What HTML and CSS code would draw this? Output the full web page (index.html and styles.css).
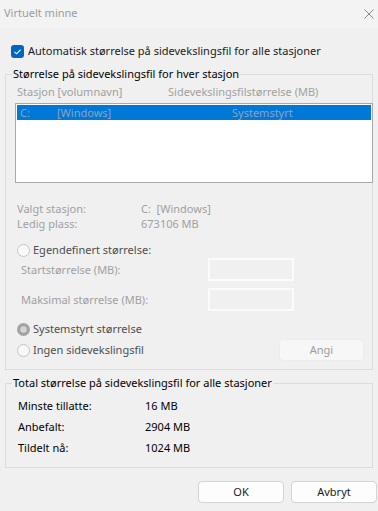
FILE: index.html
```html
<!DOCTYPE html>
<html lang="no">
<head>
<meta charset="utf-8">
<title>Virtuelt minne</title>
<link rel="stylesheet" href="styles.css">
</head>
<body>
<div class="dialog">
  <div class="titlebar">
    <span class="title">Virtuelt minne</span>
    <svg class="close" width="10" height="10" viewBox="0 0 10 10"><path d="M0.5 0.5 L9.5 9.5 M9.5 0.5 L0.5 9.5" stroke="#8a8a8a" stroke-width="1" fill="none"/></svg>
  </div>
  <div class="content">
    <label class="check-row">
      <svg class="checkbox" width="13" height="13" viewBox="0 0 13 13"><rect x="0" y="0" width="13" height="13" rx="3" fill="#0067c0"/><path d="M3.5 6.8 L5.6 8.8 L9.6 4.6" stroke="#fff" stroke-width="1.1" fill="none"/></svg>
      <span>Automatisk størrelse på sidevekslingsfil for alle stasjoner</span>
    </label>

    <fieldset class="group group-drives">
      <legend>Størrelse på sidevekslingsfil for hver stasjon</legend>
      <div class="head-row disabled">
        <span class="col-drive">Stasjon [volumnavn]</span>
        <span>Sidevekslingsfilstørrelse (MB)</span>
      </div>
      <div class="listbox">
        <div class="list-item selected">
          <span class="li-letter">C:</span>
          <span class="li-name">[Windows]</span>
          <span class="li-size">Systemstyrt</span>
        </div>
      </div>
      <div class="info disabled">
        <div class="info-row"><span class="info-label">Valgt stasjon:</span><span>C:&nbsp; [Windows]</span></div>
        <div class="info-row"><span class="info-label">Ledig plass:</span><span>673106 MB</span></div>
      </div>
      <div class="radio-row r-custom">
        <svg class="radio" width="13" height="13" viewBox="0 0 13 13"><circle cx="6.5" cy="6.5" r="6" fill="#f8f8f8" stroke="#c4c4c4" stroke-width="1"/></svg>
        <span>Egendefinert størrelse:</span>
      </div>
      <div class="field-row f-start disabled">
        <span class="field-label">Startstørrelse (MB):</span>
        <span class="field-input"></span>
      </div>
      <div class="field-row f-max disabled">
        <span class="field-label">Maksimal størrelse (MB):</span>
        <span class="field-input"></span>
      </div>
      <div class="radio-row r-system">
        <svg class="radio" width="13" height="13" viewBox="0 0 13 13"><circle cx="6.5" cy="6.5" r="6.5" fill="#a3a3a3"/><circle cx="6.5" cy="6.5" r="3.2" fill="#d6d6d6"/></svg>
        <span>Systemstyrt størrelse</span>
      </div>
      <div class="radio-row r-none">
        <svg class="radio" width="13" height="13" viewBox="0 0 13 13"><circle cx="6.5" cy="6.5" r="6" fill="#f8f8f8" stroke="#c4c4c4" stroke-width="1"/></svg>
        <span class="r-none-label">Ingen sidevekslingsfil</span>
        <span class="btn btn-disabled">Angi</span>
      </div>
    </fieldset>

    <fieldset class="group group-total">
      <legend>Total størrelse på sidevekslingsfil for alle stasjoner</legend>
      <div class="total-row"><span class="total-label">Minste tillatte:</span><span>16 MB</span></div>
      <div class="total-row"><span class="total-label">Anbefalt:</span><span>2904 MB</span></div>
      <div class="total-row"><span class="total-label">Tildelt nå:</span><span>1024 MB</span></div>
    </fieldset>

    <div class="buttons">
      <span class="btn">OK</span>
      <span class="btn">Avbryt</span>
    </div>
  </div>
</div>
</body>
</html>
```

FILE: styles.css
```css
* { box-sizing: border-box; }
html, body {
  margin: 0;
  padding: 0;
  background: #f0f0f0;
}
body {
  width: 378px;
  height: 511px;
  overflow: hidden;
  font-family: "Noto Sans", "DejaVu Sans", sans-serif;
  font-size: 11px;
  color: #1a1a1a;
}
.dialog {
  width: 378px;
  height: 511px;
  display: flex;
  flex-direction: column;
}
.titlebar {
  height: 28px;
  background: #f3f3f3;
  display: flex;
  align-items: center;
  justify-content: space-between;
  padding: 0 4px 2px 4px;
}
.title {
  color: #9c9c9c;
  line-height: 16px;
}
.close {
  margin-top: 1px;
}
.content {
  display: flex;
  flex-direction: column;
}
.check-row {
  display: flex;
  align-items: center;
  height: 16px;
  margin-top: 15px;
  padding-left: 11px;
  line-height: 16px;
}
.checkbox { margin-right: 4px; flex: none; }

.group {
  margin: 0 5px;
  padding: 0;
  border: 1px solid #dcdcdc;
  min-width: 0;
}
.group legend {
  margin-left: 6px;
  padding: 0 1px;
  line-height: 16px;
  color: #000;
}
.group-drives { margin-top: 7px; padding-bottom: 8px; }

.disabled { color: #a0a0a0; }

.head-row {
  display: flex;
  line-height: 16px;
  margin-top: 2px;
  padding-left: 11px;
}
.col-drive { width: 151px; }

.listbox {
  margin: 3px -1px 0 9px;
  height: 80px;
  border: 1px solid #a9a9a9;
  background: #fff;
  padding: 1px 1px 0 1px;
}
.list-item {
  display: flex;
  height: 15px;
  line-height: 15px;
  padding-left: 3px;
}
.list-item.selected {
  background: #0078d7;
  color: #8fa3ba;
}
.li-letter { width: 37px; }
.li-name { width: 175px; }

.info { margin-top: 18px; padding-left: 11px; }
.info-row { display: flex; line-height: 15px; }
.info-label { width: 124px; }

.radio-row {
  display: flex;
  align-items: center;
  line-height: 16px;
  padding-left: 11px;
  color: #4e4e4e;
}
.radio { margin-right: 3px; flex: none; }
.r-custom { margin-top: 11px; }
.r-system { margin-top: 10px; }
.r-none { margin-top: 2px; height: 22px; }
.r-none-label { flex: 1; }

.field-row {
  display: flex;
  align-items: center;
  height: 23px;
  padding-left: 15px;
}
.f-max { margin-top: 7px; }
.field-label { width: 187px; }
.field-input {
  width: 86px;
  height: 23px;
  border: 2px solid #fbfbfb;
  background: #f0f0f0;
}

.btn {
  display: flex;
  align-items: center;
  justify-content: center;
  width: 86px;
  height: 22px;
  border: 1px solid #d4d4d4;
  border-radius: 4px;
  background: #fdfdfd;
  color: #1a1a1a;
  line-height: 16px;
}
.btn-disabled {
  width: 85px;
  margin-right: 8px;
  background: #f7f7f7;
  border-color: #ececec;
  color: #9c9c9c;
}

.group-total { margin-top: 5px; padding-top: 4px; padding-bottom: 9px; }
.total-row {
  display: flex;
  line-height: 21px;
  padding-left: 12px;
  color: #000;
}
.total-label { width: 127px; }

.buttons {
  display: flex;
  justify-content: flex-end;
  gap: 7px;
  margin-top: 13px;
  padding-right: 1px;
}
```
